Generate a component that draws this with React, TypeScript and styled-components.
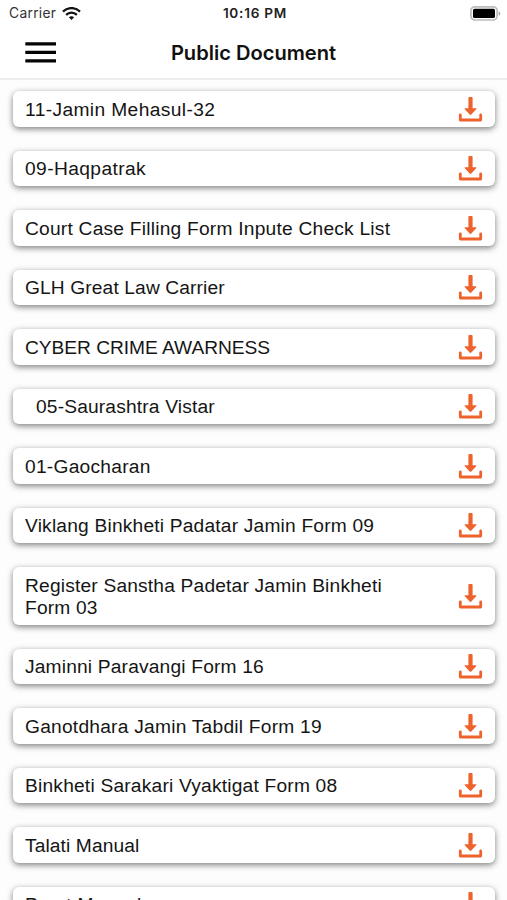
import React from "react";
import styled, { createGlobalStyle } from "styled-components";

const GlobalStyle = createGlobalStyle`
  * { box-sizing: border-box; }
  body { margin: 0; background: #fdfdfd; color: #151515; }
`;

const Screen = styled.div`
  display: flex;
  flex-direction: column;
  width: 100%;
  height: 900px;
  overflow: hidden;
  font-family: "Liberation Sans", Arial, sans-serif;
`;

const StatusBar = styled.div`
  flex: none;
  display: grid;
  grid-template-columns: 1fr auto 1fr;
  align-items: center;
  height: 27px;
  padding: 0 6px 0 9px;
  font: 400 13.8px/27px Inter, sans-serif;
  background: #fff;
`;

const Carrier = styled.div`
  display: flex;
  align-items: center;
  gap: 6px;
  letter-spacing: 0.3px;
  color: #333;
`;

const Clock = styled.time`
  font-weight: 600;
  font-size: 13.6px;
  letter-spacing: 0.75px;
  color: #222;
`;

const Battery = styled.svg`
  justify-self: end;
`;

const Header = styled.header`
  flex: none;
  display: grid;
  grid-template-columns: 32px 1fr 32px;
  align-items: center;
  height: 53px;
  padding: 0 24px;
  background: #fff;
  border-bottom: 2px solid #ededed;
`;

const MenuButton = styled.button`
  display: block;
  padding: 0;
  border: 0;
  background: none;
  height: 22px;
`;

const Title = styled.h1`
  margin: 0;
  font: 600 20.1px/24px Inter, sans-serif;
  text-align: center;
  color: #111;
`;

const List = styled.ul`
  flex: none;
  display: flex;
  flex-direction: column;
  gap: 24px;
  margin: 0;
  padding: 11.25px 12px 0 13px;
  list-style: none;
`;

const Card = styled.li`
  display: flex;
  align-items: center;
  justify-content: space-between;
  padding: 7.5px 12px 6px;
  background: #fff;
  border-radius: 6px;
  box-shadow: 0 2px 6px rgba(0, 0, 0, 0.5);
`;

const Name = styled.span<{ $tracking: number }>`
  width: 385px;
  font-size: 19.2px;
  line-height: 22px;
  letter-spacing: ${(p) => p.$tracking}px;
  white-space: pre-wrap;
`;

const DownloadButton = styled.button`
  display: flex;
  align-items: center;
  flex: none;
  height: 22px;
  padding: 0;
  border: 0;
  background: none;
`;

const documents = [
  { name: "11-Jamin Mehasul-32", tracking: 0.38 },
  { name: "09-Haqpatrak", tracking: 0.4 },
  { name: "Court Case Filling Form Inpute Check List", tracking: 0.22 },
  { name: "GLH Great Law Carrier", tracking: 0.12 },
  { name: "CYBER CRIME AWARNESS", tracking: -0.04 },
  { name: "  05-Saurashtra Vistar", tracking: 0.16 },
  { name: "01-Gaocharan", tracking: 0.25 },
  { name: "Viklang Binkheti Padatar Jamin Form 09", tracking: 0.19 },
  { name: "Register Sanstha Padetar Jamin Binkheti Form 03", tracking: 0.18 },
  { name: "Jaminni Paravangi Form 16", tracking: 0.17 },
  { name: "Ganotdhara Jamin Tabdil Form 19", tracking: 0.23 },
  { name: "Binkheti Sarakari Vyaktigat Form 08", tracking: 0.2 },
  { name: "Talati Manual", tracking: 0.1 },
  { name: "Prant Manual", tracking: 0.2 },
];

const WifiIcon = () => (
  <svg width="19" height="14" viewBox="0 0 19 14" fill="none" stroke="#111" strokeWidth="2.3">
    <path d="M1 4.6C5.8-.1 13.2-.1 18 4.6" />
    <path d="M4.1 7.8c3.1-3 7.7-3 10.8 0" />
    <path d="M6.9 10.3c1.5-1.4 3.7-1.4 5.2 0L9.5 13z" fill="#111" stroke="none" />
  </svg>
);

const BatteryIcon = () => (
  <Battery width="31" height="15" viewBox="0 0 31 15">
    <rect x="0.9" y="0.8" width="26.2" height="13.2" rx="4" fill="#fff" stroke="#bcbcbc" strokeWidth="1.7" />
    <rect x="3" y="2.8" width="22" height="9.2" rx="1.6" fill="#000" />
    <path d="M28.6 5.2c2.3.8 2.3 3.8 0 4.6z" fill="#aaa" />
  </Battery>
);

const MenuIcon = () => (
  <svg width="32" height="22" viewBox="0 0 32 22" fill="#050505">
    <rect x="1.3" y="0.2" width="31" height="3.4" rx="0.6" />
    <rect x="1.3" y="8.7" width="31" height="3.4" rx="0.6" />
    <rect x="1.3" y="17.2" width="31" height="3.4" rx="0.6" />
  </svg>
);

const DownloadIcon = () => (
  <svg width="25" height="26" viewBox="0 1 25 26">
    <path d="M10.4 2q0-1 1-1h2.2q1 0 1 1v10.2h3.2q1.2 0 .4 1l-4.9 5.4q-.8.8-1.6 0L6.8 13.2q-.8-1 .4-1h3.2z" fill="#ee632c" />
    <path
      d="M2.3 18.8v5.2h20.4v-5.2"
      fill="none"
      stroke="#ee632c"
      strokeWidth="2.8"
      strokeLinecap="round"
      strokeLinejoin="round"
    />
  </svg>
);

export default function App() {
  return (
    <Screen>
      <GlobalStyle />
      <StatusBar>
        <Carrier>
          Carrier
          <WifiIcon />
        </Carrier>
        <Clock>10:16 PM</Clock>
        <BatteryIcon />
      </StatusBar>
      <Header>
        <MenuButton aria-label="Menu">
          <MenuIcon />
        </MenuButton>
        <Title>Public Document</Title>
      </Header>
      <List>
        {documents.map(({ name, tracking }) => (
          <Card key={name}>
            <Name $tracking={tracking}>{name}</Name>
            <DownloadButton aria-label="Download">
              <DownloadIcon />
            </DownloadButton>
          </Card>
        ))}
      </List>
    </Screen>
  );
}
